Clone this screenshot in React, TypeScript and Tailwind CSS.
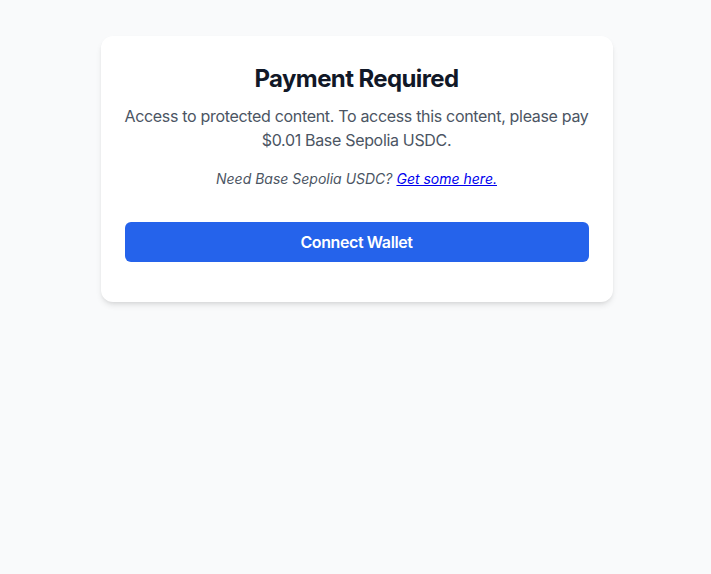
export default function App() {
  return (
    <div
      className="min-h-screen bg-[#f9fafb] pt-9 pl-[2px] flex justify-center items-start"
      style={{ fontFamily: "Inter, 'Noto Sans', sans-serif" }}
    >
      <div className="w-[512px] bg-white rounded-xl shadow-md px-6 pt-[27px] pb-10 text-center">
        <h1 className="text-2xl font-bold text-[#111827] tracking-[-0.025em]">Payment Required</h1>
        <p className="mt-[9px] text-base text-[#4b5563] tracking-[-0.02em]">
          Access to protected content. To access this content, please pay $0.01 Base Sepolia USDC.
        </p>
        <p className="mt-[17px] text-sm italic text-[#4b5563]">
          Need Base Sepolia USDC?{" "}
          <a href="#" className="text-[#0000ee] underline">
            Get some here.
          </a>
        </p>
        <button
          type="button"
          className="mt-[33px] w-full h-10 rounded-md bg-[#2563eb] text-white font-semibold text-base tracking-[-0.025em]"
        >
          Connect Wallet
        </button>
      </div>
    </div>
  );
}
